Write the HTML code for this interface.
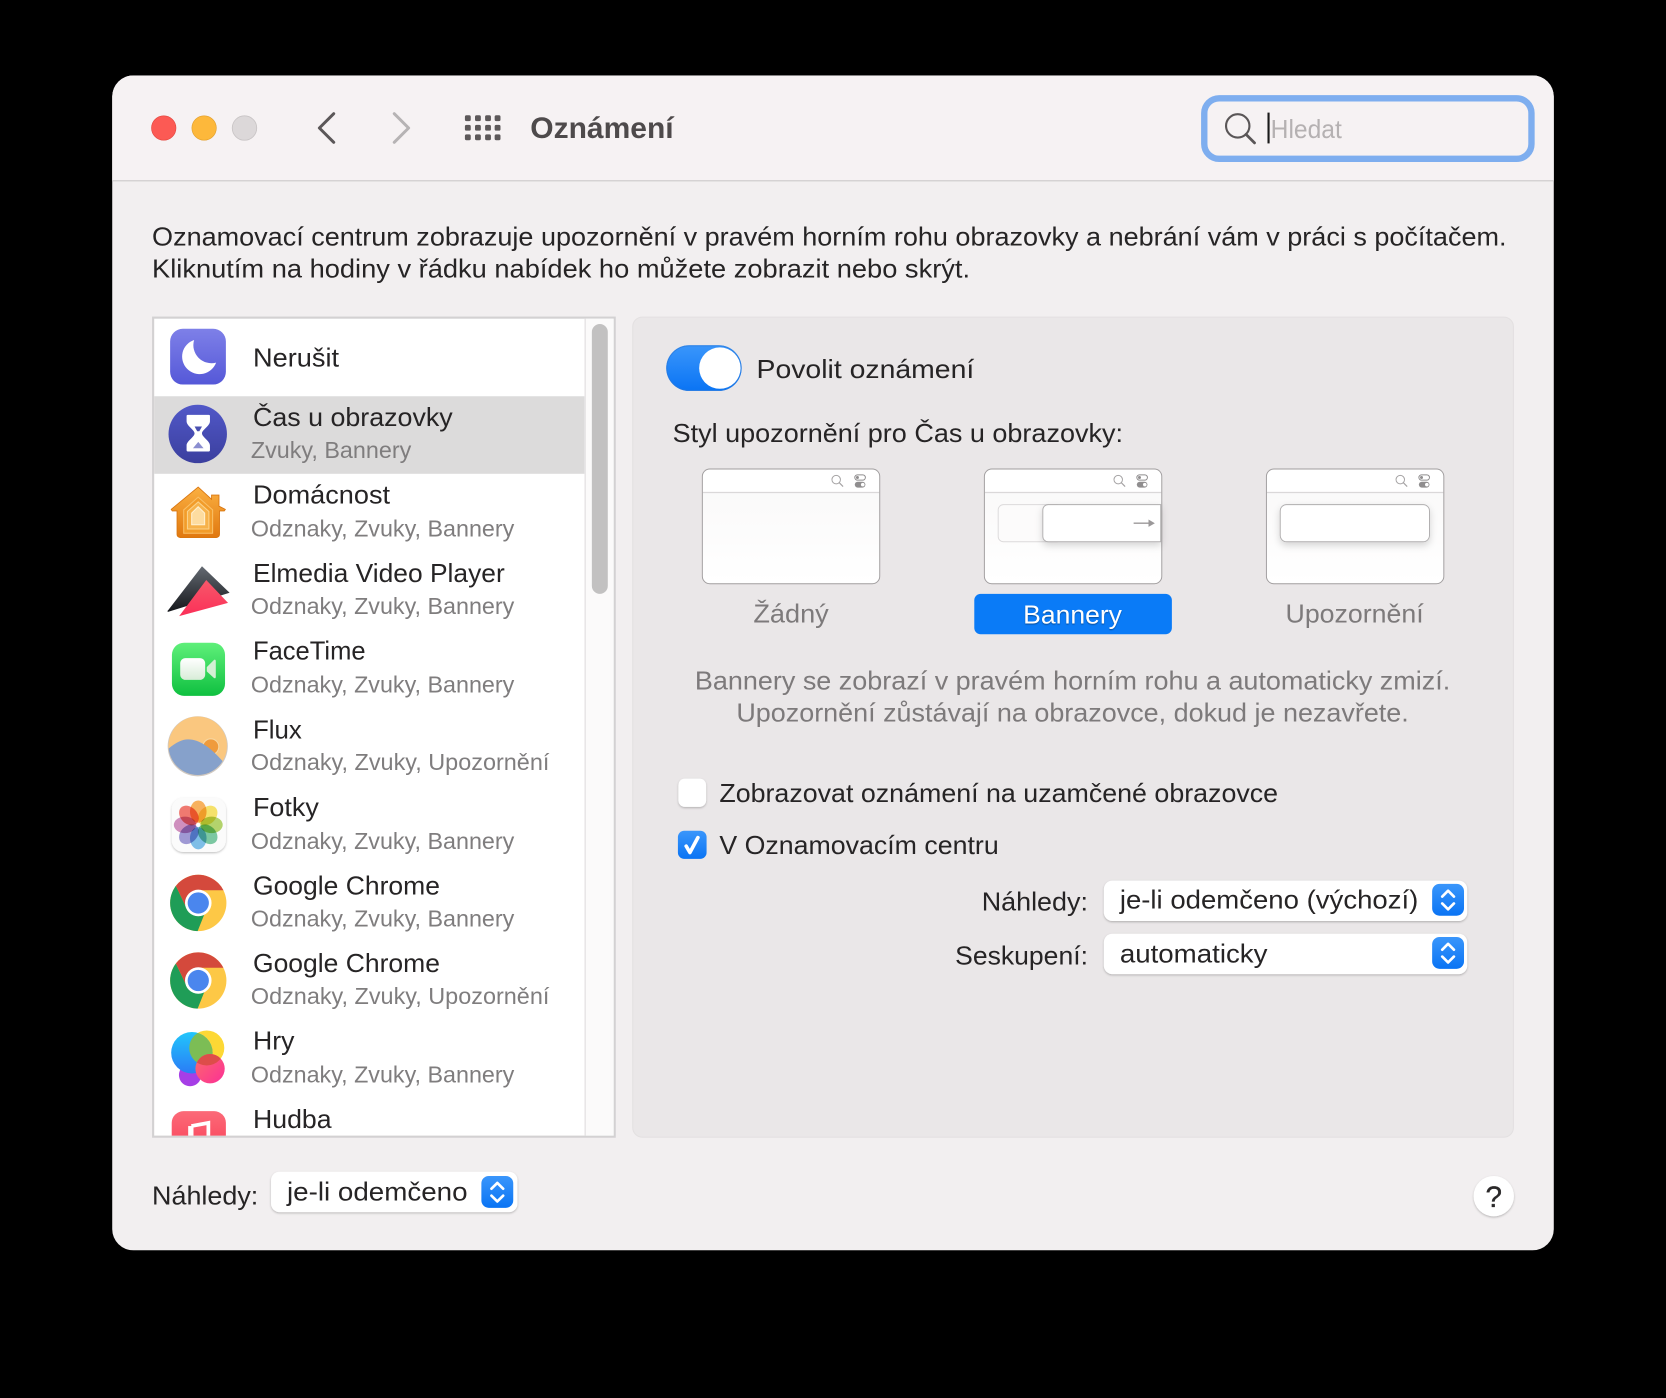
<!DOCTYPE html>
<html lang="cs"><head><meta charset="utf-8"><title>Oznámení</title>
<style>
html,body{margin:0;padding:0;background:#000;width:1666px;height:1398px;overflow:hidden}
svg{display:block}
text{font-family:"Liberation Sans",sans-serif;fill:#262425}
.m{font-size:24.5px}
.s{font-size:21.5px;fill:#7f7d7e}
.g{fill:#7d7a7b}
</style></head><body>
<svg xmlns="http://www.w3.org/2000/svg" width="1666" height="1398" viewBox="0 0 1568 1316">
<defs>
<filter id="sh" x="-10%" y="-30%" width="120%" height="170%"><feDropShadow dx="0" dy="1" stdDeviation="1" flood-color="#000" flood-opacity=".25"/></filter>
<filter id="sh2" x="-20%" y="-40%" width="140%" height="200%"><feDropShadow dx="0" dy="3" stdDeviation="3.5" flood-color="#000" flood-opacity=".16"/></filter>
<linearGradient id="gb" x1="0" y1="0" x2="0" y2="1"><stop offset="0" stop-color="#3a96fb"/><stop offset="1" stop-color="#0a74f4"/></linearGradient>
<linearGradient id="gmoon" x1="0" y1="0" x2="0" y2="1"><stop offset="0" stop-color="#7e80e8"/><stop offset="1" stop-color="#5558d8"/></linearGradient>
<linearGradient id="gtime" x1="0" y1="0" x2="0" y2="1"><stop offset="0" stop-color="#5158c8"/><stop offset="1" stop-color="#3b3f9e"/></linearGradient>
<linearGradient id="gface" x1="0" y1="0" x2="0" y2="1"><stop offset="0" stop-color="#5ff07a"/><stop offset="1" stop-color="#0fc040"/></linearGradient>
<linearGradient id="gcam" x1="0" y1="0" x2="0" y2="1"><stop offset="0" stop-color="#ffffff"/><stop offset="1" stop-color="#d8ecd8"/></linearGradient>
<linearGradient id="ghome" x1="0" y1="0" x2="0" y2="1"><stop offset="0" stop-color="#fbb041"/><stop offset="1" stop-color="#e0780f"/></linearGradient>
<linearGradient id="gdark" x1="0" y1="0" x2="0" y2="1"><stop offset="0" stop-color="#646a72"/><stop offset="1" stop-color="#15171b"/></linearGradient>
<linearGradient id="gpink" x1="0" y1="0" x2="0" y2="1"><stop offset="0" stop-color="#f7586a"/><stop offset="1" stop-color="#fb2f58"/></linearGradient>
<linearGradient id="gmus" x1="0" y1="0" x2="0" y2="1"><stop offset="0" stop-color="#fb6a78"/><stop offset="1" stop-color="#fa3450"/></linearGradient>
<linearGradient id="gthumb" x1="0" y1="0" x2="0" y2="1"><stop offset="0" stop-color="#f9f8f8"/><stop offset="1" stop-color="#ffffff"/></linearGradient>
<linearGradient id="gblue" x1="0" y1="0" x2="0" y2="1"><stop offset="0" stop-color="#22c6fb"/><stop offset="1" stop-color="#2a7cf6"/></linearGradient>
<linearGradient id="gpk" x1="0" y1="0" x2="1" y2="1"><stop offset="0" stop-color="#fd6b6b"/><stop offset="1" stop-color="#fb2f96"/></linearGradient>
<clipPath id="cc"><circle cx="0" cy="0" r="26.500"/></clipPath>
<clipPath id="cwin"><rect x="105.500" y="71" width="1357" height="1106" rx="20"/></clipPath>
<clipPath id="clist"><rect x="145" y="300" width="405" height="769"/></clipPath>
<clipPath id="cflux"><circle cx="186" cy="702" r="27.500"/></clipPath>
<clipPath id="cblue"><circle cx="180.500" cy="991" r="19.500"/></clipPath>
<clipPath id="cpink"><circle cx="197.600" cy="1006" r="13.800"/></clipPath>

<g id="chrome">
<g clip-path="url(#cc)">
<rect x="-30" y="-30" width="60" height="60" fill="#fdc846"/>
<polygon points="-11,5 -22,-18 -30,-18 -30,30 -2,30 6,10" fill="#1f9d57"/>
<polygon points="0,-12 30,-12 30,-30 -30,-30 -22,-18 -11,5" fill="#d4493c"/>
</g>
<circle r="12.500" fill="#fff"/><circle r="10" fill="#4a86ee"/>
</g>

<g id="thumb">
<rect x=".5" y=".5" width="167" height="108" rx="7" fill="url(#gthumb)"/>
<path d="M1 22.500V7.500a7 7 0 0 1 7-7h152a7 7 0 0 1 7 7V22.500z" fill="#fff"/>
<rect x="1" y="22" width="166" height="1.200" fill="#dad8d9"/>
<rect x=".5" y=".5" width="167" height="108" rx="7" fill="none" stroke="#a09d9e" stroke-width=".9"/>
<circle cx="126.500" cy="10.500" r="4" fill="none" stroke="#a5a3a4" stroke-width=".9"/>
<path d="M129.500 13.500l3.500 3.500" stroke="#a5a3a4" stroke-width="1.100"/>
<rect x="144" y="6" width="10" height="5" rx="2.500" fill="none" stroke="#8f8d8e" stroke-width=".9"/>
<circle cx="146.500" cy="8.500" r="1.400" fill="#8f8d8e"/>
<rect x="144" y="12.500" width="10" height="5.500" rx="2.750" fill="#8f8d8e"/>
<circle cx="151.500" cy="15.200" r="1.700" fill="#fff"/>
</g>

<g id="step">
<rect x="0" y="0" width="30" height="30" rx="7" fill="url(#gb)"/>
<path d="M9.500 12l5.500-5.500 5.500 5.500M9.500 18.500l5.500 5.500 5.500-5.500" fill="none" stroke="#fff" stroke-width="2.500" stroke-linecap="round" stroke-linejoin="round"/>
</g>
</defs>

<rect width="1568" height="1316" fill="#000"/>

<g clip-path="url(#cwin)">
<rect x="105" y="71" width="1358" height="1106" fill="#f2eff0"/>
<rect x="105" y="71" width="1358" height="99" fill="#f6f2f3"/>
<rect x="105" y="169.500" width="1358" height="1.300" fill="#d3d0d1"/>
</g>

<!-- traffic lights -->
<circle cx="154" cy="120.500" r="11.500" fill="#fc5a54" stroke="#e4473f" stroke-width=".6"/>
<circle cx="192" cy="120.500" r="11.500" fill="#fdb83b" stroke="#e3a02c" stroke-width=".6"/>
<circle cx="230" cy="120.500" r="11.500" fill="#dcd8d9" stroke="#c8c4c5" stroke-width=".8"/>

<!-- nav -->
<path d="M314 107L300.500 120.500L314 134" fill="none" stroke="#5b5758" stroke-width="2.800" stroke-linecap="round" stroke-linejoin="round"/>
<path d="M371 107L384.500 120.500L371 134" fill="none" stroke="#b6b3b4" stroke-width="2.800" stroke-linecap="round" stroke-linejoin="round"/>

<!-- grid -->
<g fill="#5d595a">
<rect x="437.500" y="108.500" width="5.500" height="5.500" rx="1.500"/><rect x="447" y="108.500" width="5.500" height="5.500" rx="1.500"/><rect x="456.500" y="108.500" width="5.500" height="5.500" rx="1.500"/><rect x="465.500" y="108.500" width="5.500" height="5.500" rx="1.500"/>
<rect x="437.500" y="117.500" width="5.500" height="5.500" rx="1.500"/><rect x="447" y="117.500" width="5.500" height="5.500" rx="1.500"/><rect x="456.500" y="117.500" width="5.500" height="5.500" rx="1.500"/><rect x="465.500" y="117.500" width="5.500" height="5.500" rx="1.500"/>
<rect x="437.500" y="126.500" width="5.500" height="5.500" rx="1.500"/><rect x="447" y="126.500" width="5.500" height="5.500" rx="1.500"/><rect x="456.500" y="126.500" width="5.500" height="5.500" rx="1.500"/><rect x="465.500" y="126.500" width="5.500" height="5.500" rx="1.500"/>
</g>

<text x="499" y="130" font-size="27.500" font-weight="700" style="fill:#4e4a4b" textLength="135" lengthAdjust="spacingAndGlyphs">Oznámení</text>

<!-- search -->
<rect x="1133.500" y="92.500" width="308" height="57" rx="14" fill="#f6f2f3" stroke="#7eaeef" stroke-width="6"/>
<circle cx="1165" cy="118.500" r="11" fill="none" stroke="#5a5657" stroke-width="2"/>
<path d="M1172.800 126.500l8 8" stroke="#5a5657" stroke-width="2.600" stroke-linecap="round"/>
<rect x="1193" y="106" width="2" height="29" fill="#1a1a1a"/>
<text x="1196" y="130" font-size="24.500" style="fill:#b5b1b2" textLength="67" lengthAdjust="spacingAndGlyphs">Hledat</text>

<!-- description -->
<text class="m" x="143" y="231" textLength="1275" lengthAdjust="spacingAndGlyphs">Oznamovací centrum zobrazuje upozornění v pravém horním rohu obrazovky a nebrání vám v práci s počítačem.</text>
<text class="m" x="143" y="261" textLength="770" lengthAdjust="spacingAndGlyphs">Kliknutím na hodiny v řádku nabídek ho můžete zobrazit nebo skrýt.</text>

<!-- list -->
<rect x="144" y="299" width="434.500" height="771" fill="#fff" stroke="#d3d1d2" stroke-width="2"/>
<rect x="550" y="300" width="1.500" height="769" fill="#e8e6e7"/>
<rect x="551.500" y="300" width="26" height="769" fill="#fbfafa"/>
<rect x="557" y="305" width="15" height="254" rx="7.500" fill="#c2c1c1"/>
<rect x="145" y="373" width="405" height="73" fill="#dcdbdb"/>

<g clip-path="url(#clist)">
<!-- moon -->
<rect x="160" y="309.500" width="52.500" height="52.500" rx="12" fill="url(#gmoon)"/>
<path d="M182.600 320A16.500 16.500 0 1 0 203.300 341.300A17 17 0 0 1 182.600 320Z" fill="#fff"/>

<!-- hourglass -->
<circle cx="186" cy="408.500" r="27.500" fill="url(#gtime)"/>
<path d="M176.500 390.500h20a1 1 0 0 1 1 1v5c0 4.500-7.500 8-7.500 11.500s7.500 7 7.500 11.500v4.500a1 1 0 0 1-1 1h-20a1 1 0 0 1-1-1v-4.500c0-4.500 7.500-8 7.500-11.500s-7.500-7-7.500-11.500v-5a1 1 0 0 1 1-1z" fill="#fff"/>
<path d="M183 401.500h7l-2.500 4.500h-2z" fill="#4a4fb0"/>
<path d="M186.500 416l5 6h-10z" fill="#8b8ed0"/>

<!-- home -->
<path d="M186.400 458.500L199 470V466h7v10.500l6 3-1 1.500h-4.500V503a3 3 0 0 1-3 3H169.500a3 3 0 0 1-3-3V481H162l-1-1.500z" fill="url(#ghome)" stroke="#d9750f" stroke-width=".8"/>
<path d="M186.400 468L200 480V502H172.800V480z" fill="#f29c2a" stroke="#f9bf66" stroke-width="1"/>
<path d="M186.400 472.500L196.500 481.500V498H176.300V481.500z" fill="#f7b24a" stroke="#fbd28a" stroke-width="1"/>
<path d="M186.400 477L192.500 483V494H180.300V483z" fill="#fddca0" stroke="#fff0d0" stroke-width="1"/>

<!-- elmedia -->
<path d="M190 533L216 558L158 576C157 575.500 158 574.500 158.500 574z" fill="url(#gdark)"/>
<path d="M194 546L214.500 567.500L168.500 580z" fill="url(#gpink)"/>

<!-- facetime -->
<rect x="161.700" y="605" width="50" height="50" rx="11.500" fill="url(#gface)"/>
<rect x="169.500" y="619.500" width="23.500" height="20.500" rx="5" fill="url(#gcam)"/>
<path d="M194.500 628L201 621.500C202 620.500 203 621 203 622.500V637C203 638.500 202 639 201 638L194.500 632z" fill="#d5efd5"/>

<!-- flux -->
<circle cx="186" cy="702.500" r="28.300" fill="#d0c9c2"/>
<g clip-path="url(#cflux)">
<rect x="158" y="674" width="56" height="56" fill="#fac77f"/>
<circle cx="198.300" cy="703" r="7.500" fill="#ef9b3d" stroke="#f6d7a2" stroke-width="1"/>
<path d="M157 706C165 699 171 696 177 696C188 696 198 704 209 716L215 722V735H157Z" fill="#86a1cb"/>
</g>

<!-- photos -->
<rect x="161.500" y="751" width="51" height="51" rx="11" fill="#fbfbfb" filter="url(#sh)"/>
<g transform="translate(186.500 776.500)" style="isolation:isolate">
<g style="mix-blend-mode:multiply"><ellipse cx="0" cy="-12.500" rx="7.800" ry="10.500" fill="#f5a03a" opacity=".82"/></g>
<g style="mix-blend-mode:multiply"><ellipse cx="0" cy="-12.500" rx="7.800" ry="10.500" fill="#f3da4b" opacity=".82" transform="rotate(45)"/></g>
<g style="mix-blend-mode:multiply"><ellipse cx="0" cy="-12.500" rx="7.800" ry="10.500" fill="#a2c94c" opacity=".82" transform="rotate(90)"/></g>
<g style="mix-blend-mode:multiply"><ellipse cx="0" cy="-12.500" rx="7.800" ry="10.500" fill="#5fbc8e" opacity=".82" transform="rotate(135)"/></g>
<g style="mix-blend-mode:multiply"><ellipse cx="0" cy="-12.500" rx="7.800" ry="10.500" fill="#62b0e2" opacity=".82" transform="rotate(180)"/></g>
<g style="mix-blend-mode:multiply"><ellipse cx="0" cy="-12.500" rx="7.800" ry="10.500" fill="#8a82ca" opacity=".82" transform="rotate(225)"/></g>
<g style="mix-blend-mode:multiply"><ellipse cx="0" cy="-12.500" rx="7.800" ry="10.500" fill="#c476b0" opacity=".82" transform="rotate(270)"/></g>
<g style="mix-blend-mode:multiply"><ellipse cx="0" cy="-12.500" rx="7.800" ry="10.500" fill="#ec5c50" opacity=".82" transform="rotate(315)"/></g>
<circle r="1.200" fill="#fff"/>
</g>

<!-- chrome -->
<use href="#chrome" transform="translate(186.500 850)"/>
<use href="#chrome" transform="translate(186.500 923)"/>

<!-- games -->
<circle cx="194.500" cy="986.500" r="16.500" fill="#fdd835"/>
<circle cx="178.800" cy="1012" r="10.500" fill="#a63ee6"/>
<circle cx="180.500" cy="991" r="19.500" fill="url(#gblue)"/>
<g clip-path="url(#cblue)"><circle cx="194.500" cy="986.500" r="16.500" fill="#7cbd55"/></g>
<circle cx="197.600" cy="1006" r="13.800" fill="url(#gpk)"/>
<g clip-path="url(#cpink)"><circle cx="194.500" cy="986.500" r="16.500" fill="#dd4d4a"/></g>

<!-- music -->
<rect x="161.500" y="1046" width="51" height="51" rx="11" fill="url(#gmus)"/>
<path d="M180 1060l16-3v14" fill="none" stroke="#fff" stroke-width="3.500"/>
<rect x="177" y="1060" width="5" height="14" fill="#fff"/>

<!-- list text -->
<text class="m" x="238" y="345" textLength="81" lengthAdjust="spacingAndGlyphs">Nerušit</text>
<text class="m" x="238" y="401" textLength="188" lengthAdjust="spacingAndGlyphs">Čas u obrazovky</text>
<text class="s" x="236" y="431" textLength="151" lengthAdjust="spacingAndGlyphs">Zvuky, Bannery</text>
<text class="m" x="238" y="474" textLength="129" lengthAdjust="spacingAndGlyphs">Domácnost</text>
<text class="s" x="236" y="505" textLength="248" lengthAdjust="spacingAndGlyphs">Odznaky, Zvuky, Bannery</text>
<text class="m" x="238" y="548" textLength="237" lengthAdjust="spacingAndGlyphs">Elmedia Video Player</text>
<text class="s" x="236" y="578" textLength="248" lengthAdjust="spacingAndGlyphs">Odznaky, Zvuky, Bannery</text>
<text class="m" x="238" y="621" textLength="106" lengthAdjust="spacingAndGlyphs">FaceTime</text>
<text class="s" x="236" y="652" textLength="248" lengthAdjust="spacingAndGlyphs">Odznaky, Zvuky, Bannery</text>
<text class="m" x="238" y="695" textLength="46" lengthAdjust="spacingAndGlyphs">Flux</text>
<text class="s" x="236" y="725" textLength="281" lengthAdjust="spacingAndGlyphs">Odznaky, Zvuky, Upozornění</text>
<text class="m" x="238" y="768" textLength="62" lengthAdjust="spacingAndGlyphs">Fotky</text>
<text class="s" x="236" y="799" textLength="248" lengthAdjust="spacingAndGlyphs">Odznaky, Zvuky, Bannery</text>
<text class="m" x="238" y="842" textLength="176" lengthAdjust="spacingAndGlyphs">Google Chrome</text>
<text class="s" x="236" y="872" textLength="248" lengthAdjust="spacingAndGlyphs">Odznaky, Zvuky, Bannery</text>
<text class="m" x="238" y="915" textLength="176" lengthAdjust="spacingAndGlyphs">Google Chrome</text>
<text class="s" x="236" y="945" textLength="281" lengthAdjust="spacingAndGlyphs">Odznaky, Zvuky, Upozornění</text>
<text class="m" x="238" y="988" textLength="39" lengthAdjust="spacingAndGlyphs">Hry</text>
<text class="s" x="236" y="1019" textLength="248" lengthAdjust="spacingAndGlyphs">Odznaky, Zvuky, Bannery</text>
<text class="m" x="238" y="1062" textLength="74" lengthAdjust="spacingAndGlyphs">Hudba</text>
</g>

<!-- right panel -->
<rect x="595.500" y="298.500" width="829" height="772" rx="9" fill="#eae7e8" stroke="#e3e0e1" stroke-width="1"/>

<!-- toggle -->
<rect x="627" y="325" width="71" height="43" rx="21.500" fill="url(#gb)"/>
<rect x="627.500" y="325.500" width="70" height="42" rx="21" fill="none" stroke="#2a78d8" stroke-width="1" stroke-opacity=".6"/>
<circle cx="677.500" cy="346.500" r="19.500" fill="#fff"/>
<text class="m" x="712" y="356" textLength="205" lengthAdjust="spacingAndGlyphs">Povolit oznámení</text>
<text class="m" x="633" y="416" textLength="424" lengthAdjust="spacingAndGlyphs">Styl upozornění pro Čas u obrazovky:</text>

<!-- thumbs -->
<use href="#thumb" transform="translate(660.500 441)"/>
<use href="#thumb" transform="translate(926 441)"/>
<use href="#thumb" transform="translate(1191.500 441)"/>

<!-- banner thumb contents -->
<rect x="939.500" y="475" width="60" height="35" rx="5" fill="#fcfbfb" stroke="#dcdadb" stroke-width=".9"/>
<path d="M1092.500 475H986.500a5 5 0 0 0-5 5v25a5 5 0 0 0 5 5H1092.500z" fill="#fff" stroke="#b0aeaf" stroke-width=".9" filter="url(#sh2)"/>
<path d="M1067 492.500h15" stroke="#9b9899" stroke-width="1.200"/>
<path d="M1081 489l6 3.500-6 3.500z" fill="#9b9899"/>

<!-- alert thumb contents -->
<rect x="1205" y="475" width="140.500" height="35" rx="6" fill="#fff" stroke="#b0aeaf" stroke-width=".9" filter="url(#sh2)"/>

<text x="709" y="586" font-size="24.500" class="g" textLength="71" lengthAdjust="spacingAndGlyphs">Žádný</text>
<rect x="917" y="559" width="186" height="38" rx="6" fill="#0a7bf7"/>
<text x="963" y="587" font-size="24.500" style="fill:#fff;filter:drop-shadow(0 1px 0.500px rgba(0,0,0,.35))" textLength="93" lengthAdjust="spacingAndGlyphs">Bannery</text>
<text x="1210" y="586" font-size="24.500" class="g" textLength="130" lengthAdjust="spacingAndGlyphs">Upozornění</text>

<text x="654" y="649" font-size="24.500" class="g" textLength="711" lengthAdjust="spacingAndGlyphs">Bannery se zobrazí v pravém horním rohu a automaticky zmizí.</text>
<text x="693" y="679" font-size="24.500" class="g" textLength="633" lengthAdjust="spacingAndGlyphs">Upozornění zůstávají na obrazovce, dokud je nezavřete.</text>

<!-- checkboxes -->
<rect x="638.500" y="733" width="26" height="26.500" rx="6" fill="#fff" filter="url(#sh)"/>
<text class="m" x="677" y="755" textLength="526" lengthAdjust="spacingAndGlyphs">Zobrazovat oznámení na uzamčené obrazovce</text>
<rect x="638" y="782" width="27" height="26.500" rx="6" fill="url(#gb)"/>
<path d="M645.800 796.500l3.500 6 7.500-14" fill="none" stroke="#fff" stroke-width="3.400" stroke-linecap="round" stroke-linejoin="round"/>
<text class="m" x="677" y="804" textLength="263" lengthAdjust="spacingAndGlyphs">V Oznamovacím centru</text>

<!-- popups -->
<text class="m" x="924" y="857" textLength="100" lengthAdjust="spacingAndGlyphs">Náhledy:</text>
<rect x="1039" y="829" width="342" height="38" rx="8" fill="#fff" filter="url(#sh)"/>
<text class="m" x="1054" y="855" textLength="281" lengthAdjust="spacingAndGlyphs">je-li odemčeno (výchozí)</text>
<use href="#step" transform="translate(1348 832)"/>

<text class="m" x="899" y="908" textLength="125" lengthAdjust="spacingAndGlyphs">Seskupení:</text>
<rect x="1039" y="879" width="342" height="38" rx="8" fill="#fff" filter="url(#sh)"/>
<text class="m" x="1054" y="906" textLength="139" lengthAdjust="spacingAndGlyphs">automaticky</text>
<use href="#step" transform="translate(1348 882)"/>

<!-- bottom -->
<text class="m" x="143" y="1134" textLength="100" lengthAdjust="spacingAndGlyphs">Náhledy:</text>
<rect x="255" y="1103" width="232" height="38" rx="8" fill="#fff" filter="url(#sh)"/>
<text class="m" x="270" y="1130" textLength="170" lengthAdjust="spacingAndGlyphs">je-li odemčeno</text>
<use href="#step" transform="translate(453 1107)"/>

<circle cx="1406" cy="1126" r="19" fill="#fff" filter="url(#sh)"/>
<text x="1406" y="1136" font-size="28" text-anchor="middle" style="fill:#2a2829;stroke:#2a2829;stroke-width:.3px">?</text>
</svg>
</body></html>
